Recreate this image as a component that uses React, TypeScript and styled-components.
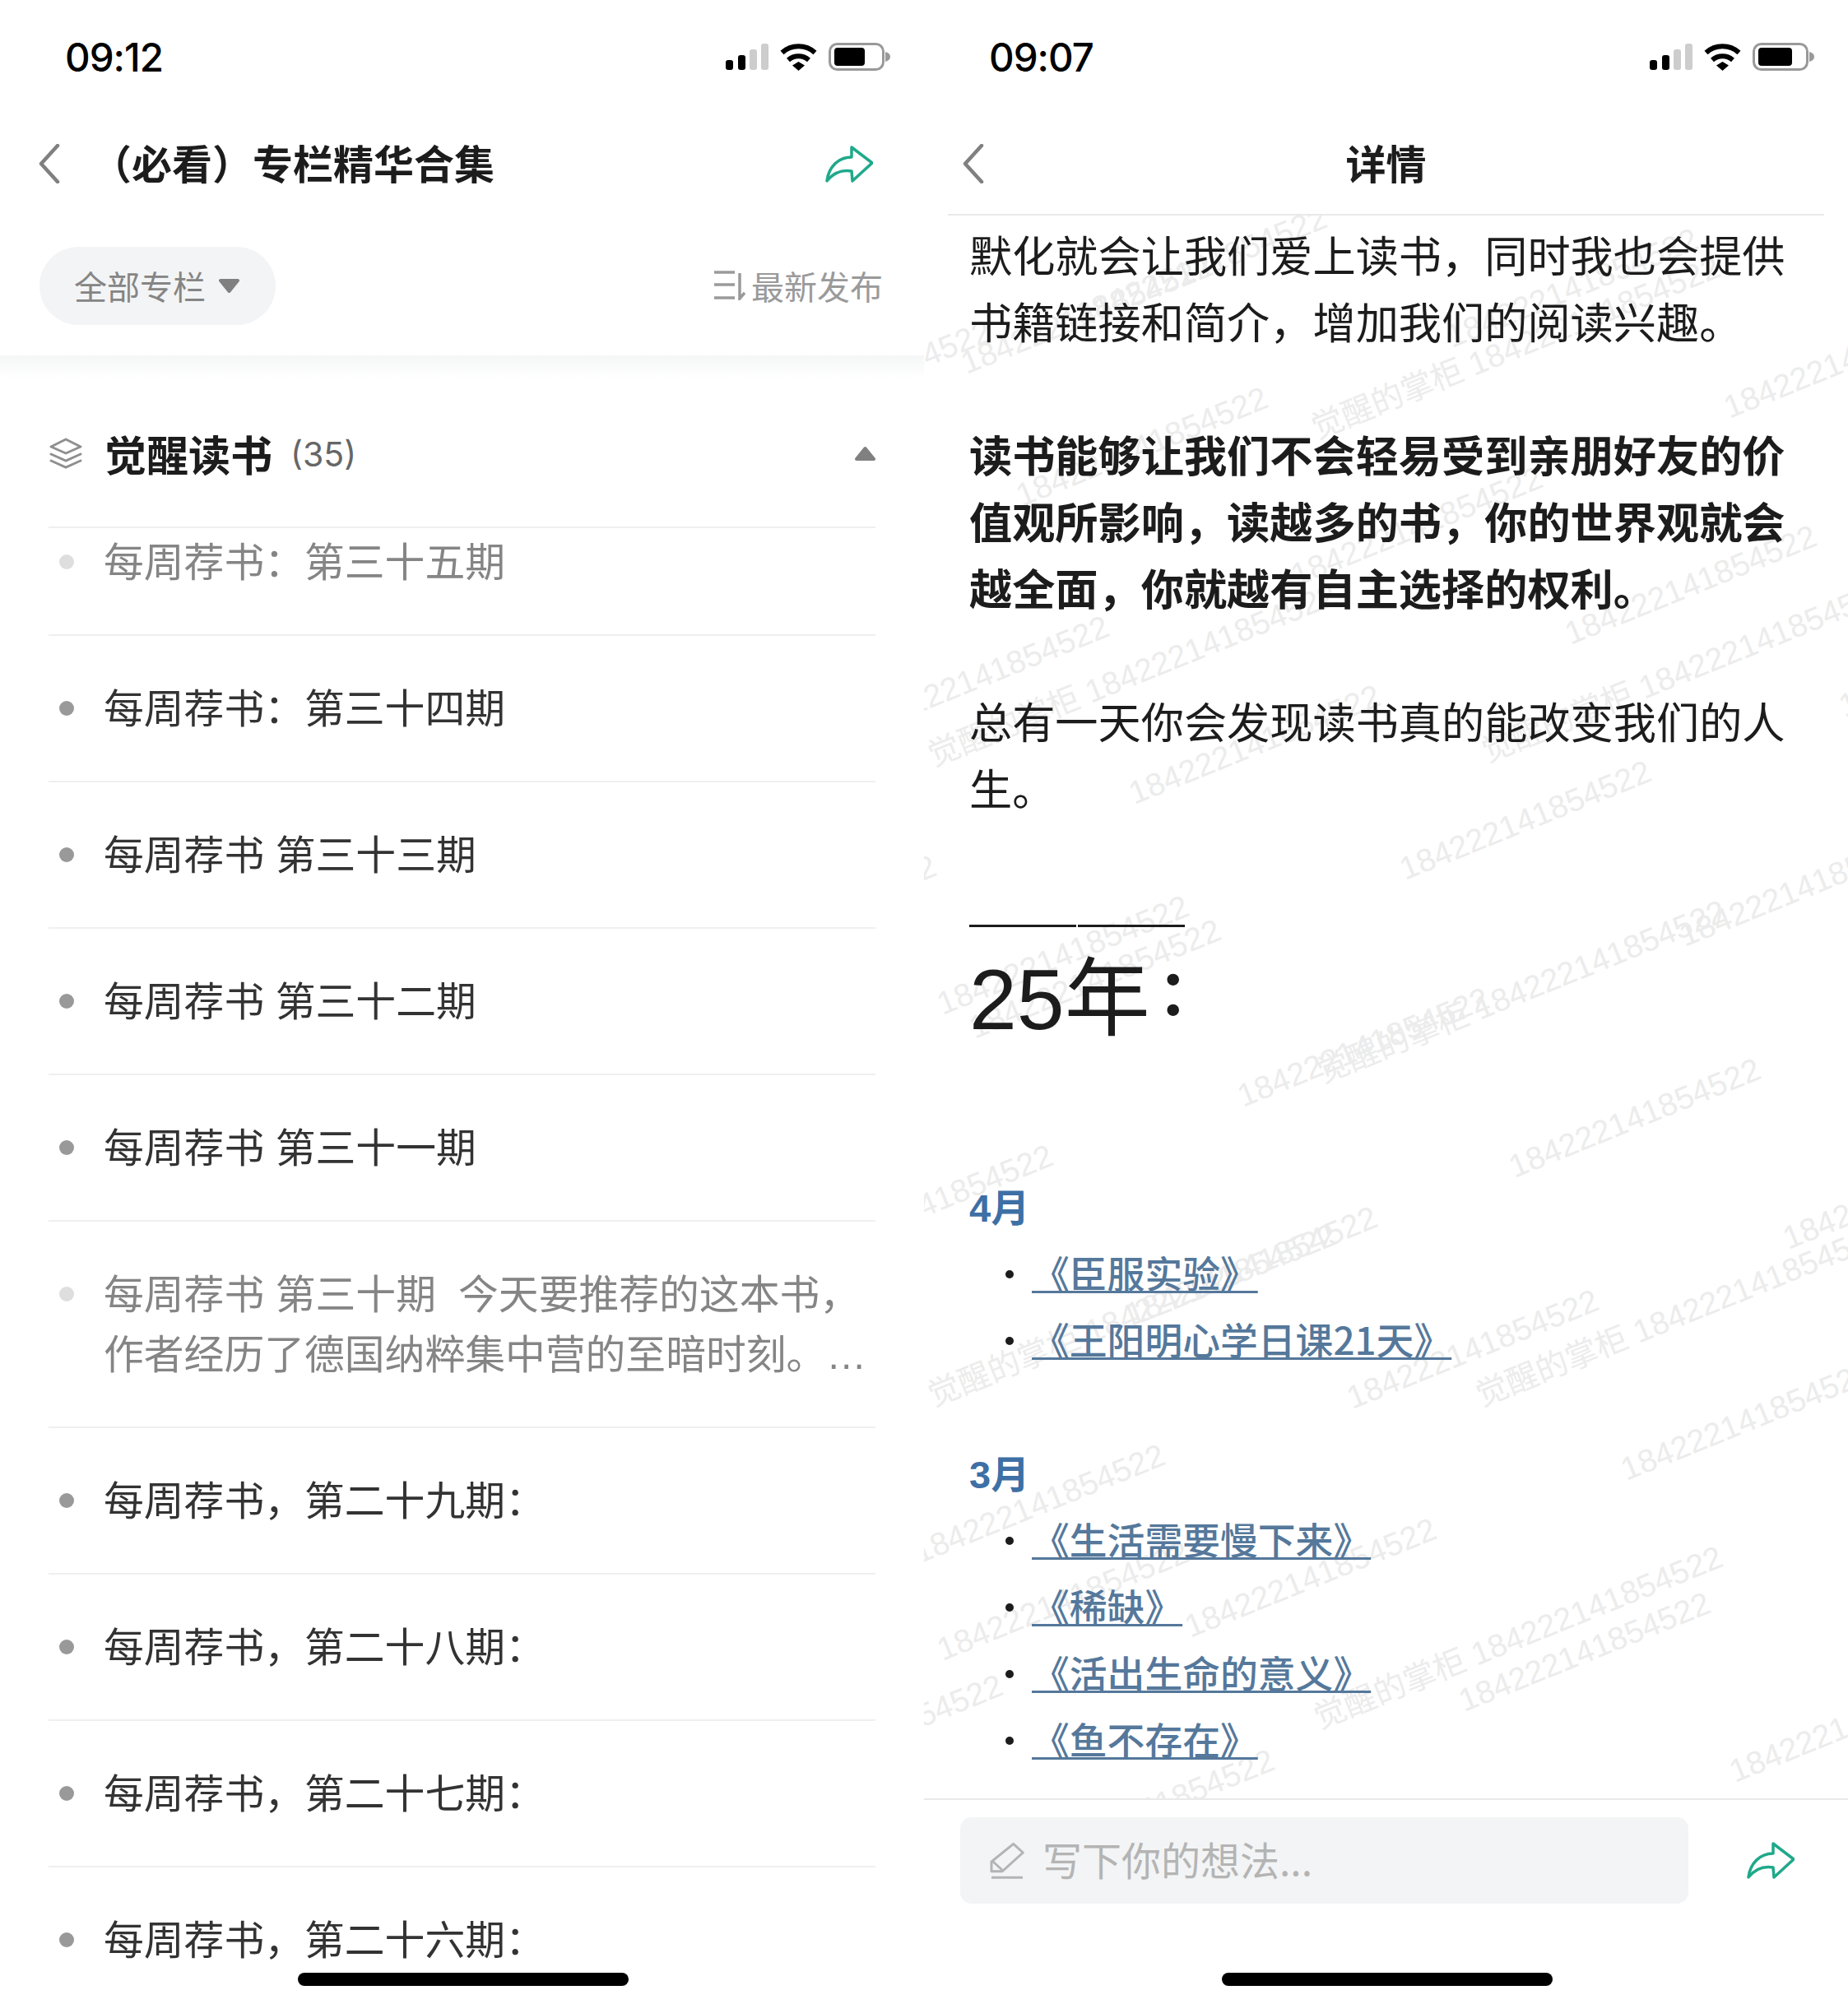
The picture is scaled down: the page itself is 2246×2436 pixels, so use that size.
import styled, { createGlobalStyle } from 'styled-components';

const GlobalStyle = createGlobalStyle`
  html, body {
    margin: 0;
    padding: 0;
    background: #fff;
  }
  body {
    font-family: 'Noto Sans CJK SC', 'Liberation Sans', sans-serif;
  }
`;

const Page = styled.div`
  position: relative;
  display: flex;
  width: 2246px;
  height: 2436px;
  overflow: hidden;
  background: #fff;
`;

const Panel = styled.div`
  position: relative;
  display: flex;
  flex-direction: column;
  width: 1123px;
  height: 2436px;
  overflow: hidden;
`;

const StatusBar = styled.div`
  display: flex;
  flex: none;
  align-items: center;
  justify-content: space-between;
  height: 136px;
  padding: 2px 41px 0 79px;
  box-sizing: border-box;
`;

const Time = styled.div`
  font-family: Inter, 'Liberation Sans', sans-serif;
  font-size: 47.5px;
  font-weight: 500;
  color: #000;
  letter-spacing: -1px;
`;

const StatusIcons = styled.div`
  display: flex;
  align-items: center;
  gap: 13px;
`;

const NavBar = styled.div<{ $ruled?: boolean }>`
  position: relative;
  display: flex;
  flex: none;
  align-items: center;
  height: 126px;
  padding: 0 62px 0 47px;
  box-sizing: border-box;
  ${(p) => p.$ruled && `
    &::after {
      content: '';
      position: absolute;
      left: 29px;
      right: 29px;
      bottom: 0;
      height: 2px;
      background: #e9e9e9;
    }
  `}
`;

const NavTitle = styled.div<{ $center?: boolean }>`
  flex: 1;
  margin-left: ${(p) => (p.$center ? '0' : '38px')};
  padding-bottom: 6px;
  font-size: 49px;
  font-weight: 700;
  color: #1c1c1c;
  white-space: nowrap;
  text-align: ${(p) => (p.$center ? 'center' : 'left')};
`;

const NavSpacer = styled.div`
  width: 11px;
`;

const FilterBar = styled.div`
  display: flex;
  flex: none;
  align-items: center;
  justify-content: space-between;
  height: 170px;
  padding: 0 50px 0 48px;
  box-sizing: border-box;
  background: #fff;
`;

const Pill = styled.div`
  display: flex;
  align-items: center;
  gap: 16px;
  width: 287px;
  height: 95px;
  padding-left: 42px;
  box-sizing: border-box;
  border-radius: 48px;
  background: #f3f4f5;
  font-size: 40px;
  color: #858585;
`;

const Sort = styled.div`
  display: flex;
  align-items: center;
  gap: 7px;
  font-size: 40px;
  color: #9a9a9a;
`;

const HeaderShade = styled.div`
  flex: none;
  height: 28px;
  background: linear-gradient(#f5f6f6, #fff);
`;

const Body = styled.div`
  display: flex;
  flex: 1;
  flex-direction: column;
  min-height: 0;
  padding: 0 59px;
  overflow: hidden;
`;

const SectionHead = styled.div`
  display: flex;
  flex: none;
  align-items: center;
  height: 182px;
  padding-top: 2px;
  border-bottom: 2px solid #efefef;
  box-sizing: border-box;
`;

const SectionName = styled.div`
  margin-left: 26px;
  font-size: 51px;
  font-weight: 700;
  color: #1c1c1c;
`;

const SectionCount = styled.div`
  flex: 1;
  margin-left: 22px;
  padding-top: 2px;
  font-family: Inter, 'Liberation Sans', sans-serif;
  font-size: 41px;
  color: #666;
`;

const Row = styled.div<{ $clipped?: boolean }>`
  display: flex;
  flex: none;
  gap: 36px;
  padding: ${(p) => (p.$clipped ? '6px' : '53px')} 0 50px 13px;
  border-bottom: 2px solid #efefef;
`;

const Dot = styled.div<{ $read?: boolean }>`
  flex: none;
  width: 18px;
  height: 18px;
  margin-top: 26px;
  border-radius: 50%;
  background: ${(p) => (p.$read ? '#dedede' : '#999')};
`;

const RowText = styled.div<{ $read?: boolean }>`
  font-family: 'Liberation Sans', 'Noto Sans CJK SC', sans-serif;
  font-size: 48.8px;
  line-height: 73px;
  white-space: pre;
  color: ${(p) => (p.$read ? '#858585' : '#333')};
`;

const HomeBar = styled.div`
  position: absolute;
  left: 362px;
  bottom: 22px;
  width: 402px;
  height: 16px;
  border-radius: 8px;
  background: #000;
`;

const Article = styled.div`
  position: relative;
  flex: none;
  height: 1924px;
  padding: 6px 56px 0 55px;
  box-sizing: border-box;
  overflow: hidden;
`;

const Mark = styled.div`
  position: absolute;
  font-family: 'Liberation Sans', 'Noto Sans CJK SC', sans-serif;
  font-size: 39px;
  line-height: 44px;
  margin-top: -22px;
  color: #ececec;
  white-space: pre;
  transform: rotate(-22deg);
  transform-origin: left center;
`;

const Para = styled.p<{ $strong?: boolean; $last?: boolean }>`
  position: relative;
  margin: 0 0 ${(p) => (p.$last ? '0' : '81px')};
  font-size: 52.2px;
  line-height: 81px;
  font-weight: ${(p) => (p.$strong ? 700 : 400)};
  color: #1c1c1c;
`;

const Rule = styled.div`
  position: relative;
  display: flex;
  gap: 2px;
  margin-top: 127px;
`;

const RuleSegment = styled.div`
  width: 130px;
  height: 3px;
  background: #1c1c1c;
`;

const BigTitle = styled.h1`
  position: relative;
  margin: 23px 0 148px;
  font-family: 'Liberation Sans', 'Noto Sans CJK SC', sans-serif;
  font-size: 104px;
  line-height: 130px;
  font-weight: 400;
  color: #1c1c1c;
`;

const BigColon = styled.span`
  margin-left: 9px;
  font-size: 76px;
  font-weight: 700;
  line-height: 0;
  vertical-align: 17px;
`;

const Month = styled.h2`
  position: relative;
  margin: 0;
  font-family: 'Liberation Sans', 'Noto Sans CJK SC', sans-serif;
  font-size: 47px;
  line-height: 81px;
  font-weight: 700;
  color: #3e6fa5;
`;

const BookList = styled.ul`
  position: relative;
  margin: 0 0 81px;
  padding: 0 0 0 76px;
  list-style: none;
`;

const BookItem = styled.li`
  position: relative;
  height: 81px;
  line-height: 75px;
  font-size: 45.8px;
  font-weight: 500;

  &::before {
    content: '';
    position: absolute;
    left: -32px;
    top: 35px;
    width: 10px;
    height: 10px;
    border-radius: 50%;
    background: #1c1c1c;
  }
`;

const BookLink = styled.a`
  color: #55789b;
  white-space: pre;
  text-decoration: underline;
  text-decoration-thickness: 3px;
  text-decoration-skip-ink: none;
  text-underline-offset: 3px;
`;

const Composer = styled.div`
  display: flex;
  flex: none;
  align-items: flex-start;
  justify-content: space-between;
  height: 248px;
  padding: 21px 65px 0 44px;
  box-sizing: border-box;
  border-top: 2px solid #e9e9e9;
`;

const InputBox = styled.div`
  display: flex;
  align-items: center;
  gap: 22px;
  width: 885px;
  height: 105px;
  padding: 0 0 0 36px;
  box-sizing: border-box;
  border-radius: 14px;
  background: #f3f4f5;
  font-size: 48px;
  color: #b4b4b4;
`;

const Placeholder = styled.span`
  padding-bottom: 6px;
`;

const ShareSlot = styled.div`
  margin-top: 30px;
`;

function SignalIcon() {
  return (
    <svg width="52" height="32" viewBox="0 0 52 32">
      <rect x="0" y="20" width="9" height="12" rx="3" fill="#000" />
      <rect x="15" y="14" width="9" height="18" rx="3" fill="#000" />
      <rect x="29" y="7" width="9" height="25" rx="3" fill="#cdcdcd" />
      <rect x="43" y="0" width="9" height="32" rx="3" fill="#cdcdcd" />
    </svg>
  );
}

function WifiIcon() {
  return (
    <svg width="47" height="33" viewBox="0 0 47 33">
      <path d="M3.5 11A30 30 0 0 1 43.5 11" fill="none" stroke="#000" strokeWidth="6" />
      <path d="M11 20A19 19 0 0 1 36 20" fill="none" stroke="#000" strokeWidth="6" />
      <path d="M16 26.5L23.5 22L31 26.5L23.5 33Z" fill="#000" />
    </svg>
  );
}

function BatteryIcon({ level }: { level: number }) {
  return (
    <svg width="75" height="34" viewBox="0 0 75 34">
      <rect x="1.5" y="1.5" width="65" height="31" rx="9" fill="none" stroke="#999" strokeWidth="3" />
      <rect x="7" y="6" width={level} height="22" rx="4" fill="#000" />
      <path d="M69 11C73 12 75 14 75 17C75 20 73 22 69 23Z" fill="#999" />
    </svg>
  );
}

function Status({ time, level }: { time: string; level: number }) {
  return (
    <StatusBar>
      <Time>{time}</Time>
      <StatusIcons>
        <SignalIcon />
        <WifiIcon />
        <BatteryIcon level={level} />
      </StatusIcons>
    </StatusBar>
  );
}

function BackIcon() {
  return (
    <svg width="26" height="48" viewBox="0 0 26 48">
      <path d="M23 2L3 24L23 46" fill="none" stroke="#808080" strokeWidth="4.5" strokeLinecap="round" strokeLinejoin="round" />
    </svg>
  );
}

function ShareIcon() {
  return (
    <svg width="58" height="45" viewBox="0 0 58 45">
      <path
        d="M2 43C4 26 16 14 32 14L32 2L57 21L33 43L32 31C20 29 10 33 2 43Z"
        fill="none"
        stroke="#1fa98a"
        strokeWidth="3.5"
        strokeLinejoin="round"
      />
    </svg>
  );
}

function TriangleIcon({ up }: { up?: boolean }) {
  return (
    <svg width="25" height="19" viewBox="0 0 25 19">
      <path
        d={up ? 'M12.5 3L23 16L2 16Z' : 'M2 3L23 3L12.5 16Z'}
        fill="#808080"
        stroke="#808080"
        strokeWidth="4"
        strokeLinejoin="round"
      />
    </svg>
  );
}

function SortIcon() {
  return (
    <svg width="38" height="36" viewBox="0 0 38 36">
      <path
        d="M0 2H25M0 17H25M0 33H25M31 3V34L37 27"
        fill="none"
        stroke="#9a9a9a"
        strokeWidth="3.5"
      />
    </svg>
  );
}

function LayersIcon() {
  return (
    <svg width="42" height="38" viewBox="0 0 42 38">
      <path d="M21 2L39 11L21 19L3 11Z" fill="none" stroke="#8f8f8f" strokeWidth="3" strokeLinejoin="round" />
      <path d="M3 20L21 28L39 20" fill="none" stroke="#8f8f8f" strokeWidth="3" strokeLinecap="round" />
      <path d="M3 28L21 36L39 28" fill="none" stroke="#8f8f8f" strokeWidth="3" strokeLinecap="round" />
    </svg>
  );
}

function PencilIcon() {
  return (
    <svg width="42" height="46" viewBox="0 0 42 46">
      <path
        d="M2 35.7L2 24L28.7 2.3L40.3 13L15.3 35.7ZM4 24L16 35M2 43.3H40"
        fill="none"
        stroke="#b4b4b4"
        strokeWidth="3"
        strokeLinejoin="round"
      />
    </svg>
  );
}

const rows = [
  { text: '每周荐书：第三十五期', read: true, clipped: true },
  { text: '每周荐书：第三十四期' },
  { text: '每周荐书 第三十三期' },
  { text: '每周荐书 第三十二期' },
  { text: '每周荐书 第三十一期' },
  { text: '每周荐书 第三十期  今天要推荐的这本书，\n作者经历了德国纳粹集中营的至暗时刻。…', read: true },
  { text: '每周荐书，第二十九期：' },
  { text: '每周荐书，第二十八期：' },
  { text: '每周荐书，第二十七期：' },
  { text: '每周荐书，第二十六期：' },
];

const digits = '184222141854522';
const named = '觉醒的掌柜 184222141854522';

// start point of each watermark, in article coordinates
const marks: [number, number, string][] = [
  [186, 123, digits], [637, 149, digits], [47, 181, digits], [-222, 261, digits],
  [473, 260, named], [974, 235, digits], [114, 342, digits], [448, 439, digits],
  [781, 510, digits], [-79, 620, digits], [7, 658, named], [680, 653, named],
  [251, 704, digits], [580, 796, digits], [-289, 911, digits], [1114, 598, digits],
  [480, 1043, named], [383, 1072, digits], [920, 877, digits], [18, 960, digits],
  [57, 989, digits], [713, 1158, digits], [-147, 1263, digits], [247, 1338, digits],
  [7, 1436, named], [516, 1439, digits], [673, 1436, named], [1046, 1245, digits],
  [849, 1526, digits], [-11, 1627, digits], [319, 1717, digits], [18, 1745, digits],
  [476, 1828, named], [652, 1807, digits], [981, 1893, digits], [-208, 1907, digits],
  [122, 1998, digits],
];

const april = ['《臣服实验》', '《王阳明心学日课21天》'];
const march = ['《生活需要慢下来》', '《稀缺》', '《活出生命的意义》', '《鱼不存在》'];

export default function App() {
  return (
    <Page>
      <GlobalStyle />
      <Panel>
        <Status time="09:12" level={37} />
        <NavBar>
          <BackIcon />
          <NavTitle>（必看）专栏精华合集</NavTitle>
          <ShareIcon />
        </NavBar>
        <FilterBar>
          <Pill>
            全部专栏
            <TriangleIcon />
          </Pill>
          <Sort>
            <SortIcon />
            最新发布
          </Sort>
        </FilterBar>
        <HeaderShade />
        <Body>
          <SectionHead>
            <LayersIcon />
            <SectionName>觉醒读书</SectionName>
            <SectionCount>(35)</SectionCount>
            <TriangleIcon up />
          </SectionHead>
          {rows.map((row) => (
            <Row key={row.text} $clipped={row.clipped}>
              <Dot $read={row.read} />
              <RowText $read={row.read}>{row.text}</RowText>
            </Row>
          ))}
        </Body>
        <HomeBar />
      </Panel>
      <Panel>
        <Status time="09:07" level={41} />
        <NavBar $ruled>
          <BackIcon />
          <NavTitle $center>详情</NavTitle>
          <NavSpacer />
        </NavBar>
        <Article>
          {marks.map(([x, y, text], i) => (
            <Mark key={i} style={{ left: x, top: y }}>{text}</Mark>
          ))}
          <Para>默化就会让我们爱上读书，同时我也会提供书籍链接和简介，增加我们的阅读兴趣。</Para>
          <Para $strong>读书能够让我们不会轻易受到亲朋好友的价值观所影响，读越多的书，你的世界观就会越全面，你就越有自主选择的权利。</Para>
          <Para $last>总有一天你会发现读书真的能改变我们的人生。</Para>
          <Rule>
            <RuleSegment />
            <RuleSegment />
          </Rule>
          <BigTitle>25年<BigColon>：</BigColon></BigTitle>
          <Month>4月</Month>
          <BookList>
            {april.map((title) => (
              <BookItem key={title}>
                <BookLink>{title}</BookLink>
              </BookItem>
            ))}
          </BookList>
          <Month>3月</Month>
          <BookList>
            {march.map((title) => (
              <BookItem key={title}>
                <BookLink>{title}</BookLink>
              </BookItem>
            ))}
          </BookList>
        </Article>
        <Composer>
          <InputBox>
            <PencilIcon />
            <Placeholder>写下你的想法...</Placeholder>
          </InputBox>
          <ShareSlot>
            <ShareIcon />
          </ShareSlot>
        </Composer>
        <HomeBar />
      </Panel>
    </Page>
  );
}
